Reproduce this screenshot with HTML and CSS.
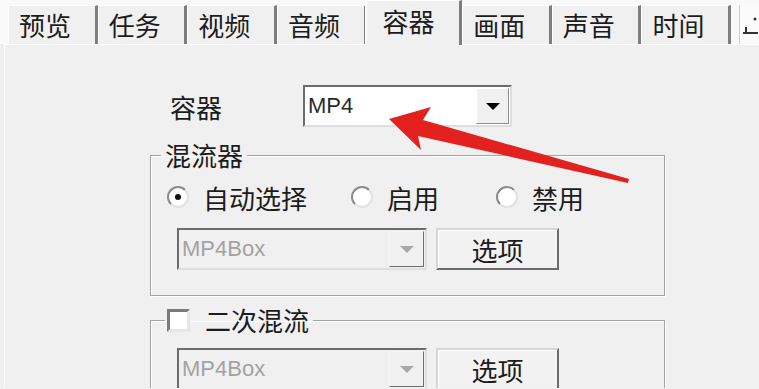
FILE: index.html
```html
<!DOCTYPE html>
<html lang="zh-CN">
<head>
    <meta charset="UTF-8">
    <title>容器</title>
    <link rel="stylesheet" href="styles.css">
</head>
<body>
<div class="window">
    <div class="tabs">
        <div class="tab">预览</div>
        <div class="tab">任务</div>
        <div class="tab">视频</div>
        <div class="tab">音频</div>
        <div class="tab tab-active">容器</div>
        <div class="tab">画面</div>
        <div class="tab">声音</div>
        <div class="tab">时间</div>
        <div class="tab-scroll">
            <svg width="20" height="38" viewBox="0 0 20 38">
                <path d="M3 28 H18 M6 28 V22" stroke="#333" stroke-width="2" fill="none"/>
                <circle cx="15" cy="14" r="1.5" fill="#333"/>
            </svg>
        </div>
    </div>

    <div class="panel">
        <div class="row row-container">
            <span class="label">容器</span>
            <div class="combo">
                <span class="combo-text">MP4</span>
                <span class="combo-btn"><span class="caret"></span></span>
            </div>
        </div>

        <fieldset class="group">
            <legend class="group-title">混流器</legend>
            <div class="group-body">
                <div class="radios">
                    <label class="radio-item radio-auto"><span class="radio"><span class="radio-dot"></span></span>自动选择</label>
                    <label class="radio-item radio-on"><span class="radio"></span>启用</label>
                    <label class="radio-item"><span class="radio"></span>禁用</label>
                </div>
                <div class="row row-muxer">
                    <div class="combo combo-disabled">
                        <span class="combo-text">MP4Box</span>
                        <span class="combo-btn"><span class="caret"></span></span>
                    </div>
                    <button type="button" class="btn">选项</button>
                </div>
            </div>
        </fieldset>

        <fieldset class="group group-remux">
            <legend class="group-title group-check"><span class="check"></span>二次混流</legend>
            <div class="group-body">
                <div class="row row-muxer">
                    <div class="combo combo-disabled">
                        <span class="combo-text">MP4Box</span>
                        <span class="combo-btn"><span class="caret"></span></span>
                    </div>
                    <button type="button" class="btn">选项</button>
                </div>
            </div>
        </fieldset>
    </div>

    <svg class="arrow" width="759" height="389" viewBox="0 0 759 389">
        <polygon points="389,119 431,107 423,120 629,179 628,183 418,136 421,150" fill="#e3211e"/>
    </svg>
</div>
</body>
</html>
```

FILE: styles.css
```css
* {
    margin: 0;
    padding: 0;
    box-sizing: border-box;
}

body {
    width: 759px;
    height: 389px;
    overflow: hidden;
    background-color: #f0f0f0;
    font-family: "Noto Sans CJK SC", "Liberation Sans", sans-serif;
    color: #1c1c1c;
}

.window {
    position: relative;
    height: 389px;
    overflow: hidden;
}

/* tab strip */
.tabs {
    display: flex;
    align-items: flex-end;
    height: 44px;
    padding-left: 8px;
    background-color: #f9f9f9;
}

.tab {
    width: 90px;
    height: 39px;
    padding-left: 10px;
    background-color: #f0f0f0;
    border-left: 1px solid #ffffff;
    border-top: 1px solid #ffffff;
    border-right: 3px solid #7e7e7e;
    font-size: 26px;
    line-height: 37px;
    white-space: nowrap;
}

.tab-active {
    position: relative;
    z-index: 1;
    width: 98px;
    height: 45px;
    margin-left: -2px;
    margin-bottom: -1px;
    padding-left: 16px;
    line-height: 40px;
    border-left: 2px solid #ffffff;
}

.tab-scroll {
    width: 20px;
    height: 39px;
    margin-left: 8px;
    background-color: #fbfbfb;
    border-left: 1px solid #d0d0d0;
}

/* page body */
.panel {
    height: 344px;
    overflow: hidden;
    margin-left: 4px;
    border-left: 1px solid #ffffff;
    border-top: 1px solid #ffffff;
}

.row {
    display: flex;
    align-items: center;
}

.row-container {
    margin-top: 40px;
    padding-left: 165px;
}

.label {
    width: 133px;
    font-size: 26px;
}

.combo {
    display: flex;
    align-items: center;
    width: 209px;
    height: 42px;
    background-color: #ffffff;
    border: 2px solid;
    border-color: #6c6c6c #dedede #dedede #6c6c6c;
}

.combo-text {
    flex: 1;
    padding-left: 3px;
    font-family: "Liberation Sans", sans-serif;
    font-size: 22px;
    color: #2a2a2a;
}

.combo-btn {
    display: flex;
    align-items: center;
    justify-content: center;
    width: 33px;
    height: 36px;
    margin-right: 1px;
    background-color: #f0f0f0;
    border: 1px solid;
    border-color: #ffffff #8c8c8c #8c8c8c #ffffff;
}

.caret {
    width: 0;
    height: 0;
    border-left: 7px solid transparent;
    border-right: 7px solid transparent;
    border-top: 7px solid #000000;
}

.combo-disabled {
    width: 250px;
    background-color: #f0f0f0;
}

.combo-disabled .combo-text {
    color: #a2a2a2;
}

.combo-disabled .combo-btn {
    width: 35px;
    border-color: #f4f4f4 #6e6e6e #6e6e6e #f4f4f4;
}

.combo-disabled .caret {
    border-top-color: #a8a8a8;
}

/* group boxes */
.group {
    width: 515px;
    margin: 14px 0 0 145px;
    padding: 0;
    border: 1px solid #a3a3a3;
    box-shadow: 1px 1px 0 #ffffff, inset 1px 1px 0 #ffffff;
}

.group-title {
    margin-left: 10px;
    padding: 0 4px;
    font-size: 26px;
    line-height: 28px;
}

.group-body {
    padding: 14px 0 25px 16px;
}

.radios {
    display: flex;
    align-items: center;
    height: 28px;
}

.radio-item {
    display: flex;
    align-items: center;
    gap: 14px;
    font-size: 26px;
}

.radio-auto {
    width: 184px;
}

.radio-on {
    width: 145px;
}

.radio {
    display: flex;
    align-items: center;
    justify-content: center;
    width: 22px;
    height: 22px;
    border-radius: 50%;
    background-color: #ffffff;
    border: 2px solid;
    border-color: #8a8a8a #e2e2e2 #e2e2e2 #8a8a8a;
}

.radio-dot {
    width: 6px;
    height: 6px;
    border-radius: 50%;
    background-color: #111111;
}

.row-muxer {
    margin-top: 17px;
    padding-left: 10px;
}

.btn {
    width: 123px;
    height: 42px;
    margin-left: 9px;
    background-color: #f2f2f2;
    border: 2px solid;
    border-color: #d6d6d6 #6c6c6c #6c6c6c #d6d6d6;
    box-shadow: inset 1px 1px 0 #ffffff;
    font-family: "Noto Sans CJK SC", sans-serif;
    font-size: 26px;
    color: #1c1c1c;
}

.group-remux {
    margin-top: 10px;
}

.group-check {
    display: flex;
    align-items: center;
    gap: 15px;
    margin-left: 14px;
    padding: 0 4px 0 2px;
}

.check {
    width: 23px;
    height: 23px;
    background-color: #ffffff;
    border: 3px solid;
    border-color: #7a7a7a #e6e6e6 #e6e6e6 #7a7a7a;
}

.group-remux .row-muxer {
    margin-top: 0;
}

.arrow {
    position: absolute;
    top: 0;
    left: 0;
    pointer-events: none;
}
```
